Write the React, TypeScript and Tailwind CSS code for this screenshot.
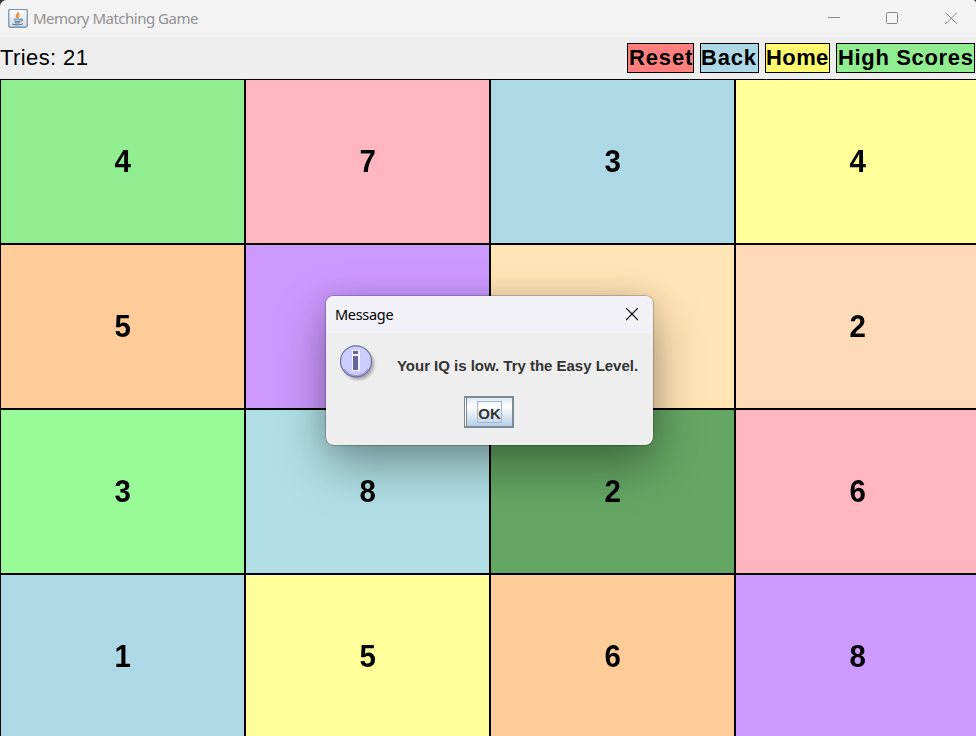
import React from "react";

const cards = [
  { n: "4", c: "bg-[#90ee90]" },
  { n: "7", c: "bg-[#ffb6c1]" },
  { n: "3", c: "bg-[#add8e6]" },
  { n: "4", c: "bg-[#ffff99]" },
  { n: "5", c: "bg-[#ffcc99]" },
  { n: "", c: "bg-[#cc99ff]" },
  { n: "", c: "bg-[#ffe4b5]" },
  { n: "2", c: "bg-[#ffdab9]" },
  { n: "3", c: "bg-[#98fb98]" },
  { n: "8", c: "bg-[#b0e0e6]" },
  { n: "2", c: "bg-[#64a664]" },
  { n: "6", c: "bg-[#ffb6c1]" },
  { n: "1", c: "bg-[#add8e6]" },
  { n: "5", c: "bg-[#ffff99]" },
  { n: "6", c: "bg-[#ffcc99]" },
  { n: "8", c: "bg-[#cc99ff]" },
];

const actions = [
  { label: "Reset", c: "w-[67px] pl-px tracking-[0.85px] bg-[#ff7f7f]" },
  { label: "Back", c: "w-[59px] tracking-[0.8px] bg-[#add8e6]" },
  { label: "Home", c: "w-[65px] tracking-[0.4px] bg-[#fffa6e]" },
  { label: "High Scores", c: "w-[139px] pl-px tracking-[0.65px] bg-[#90ee90]" },
];

function JavaIcon() {
  return (
    <svg width="20" height="20" viewBox="0 0 20 20" fill="none">
      <defs>
        <linearGradient id="java-bg" x1="0" y1="0" x2="0" y2="1">
          <stop offset="0" stopColor="#fff" />
          <stop offset="1" stopColor="#d5dde4" />
        </linearGradient>
      </defs>
      <rect x="0.75" y="0.25" width="18.5" height="18" rx="1.8" fill="url(#java-bg)" stroke="#7896b0" strokeWidth="1.3" />
      <path d="M10.200 3.200c.8 1.500-2.400 2.400-2 4.100.2.900.9 1.100 1.100 1.800M11.500 5.200c-1.800.8-2.300 1.400-1.600 2.300.5.700.3 1-.1 1.500" stroke="#ee8d3c" strokeWidth="1.500" />
      <path d="M5.500 10.200h7.500M6.300 12c1.800.6 4.200.6 6 0M6.800 13.500c1.500.6 3.500.6 5 0M12.800 10.200c2.200-.3 2 1.600-.1 2.300M4.300 15c2.600 1.200 8 1.100 10.700-.2" stroke="#5380a5" strokeWidth="1.100" />
    </svg>
  );
}

function InfoIcon() {
  return (
    <svg width="40" height="40" viewBox="0 0 40 40">
      <defs>
        <filter id="soft" x="-20%" y="-20%" width="140%" height="140%">
          <feGaussianBlur stdDeviation="1.700" />
        </filter>
      </defs>
      <circle cx="18.500" cy="19" r="15.500" fill="#000" opacity="0.3" filter="url(#soft)" />
      <circle cx="16" cy="16.300" r="15.500" fill="#ccccff" stroke="#7171a3" strokeWidth="1.200" />
      <path d="M4 24a14.300 14.300 0 0 0 24 0" fill="none" stroke="#9999cc" strokeWidth="1.200" />
      <path d="M12 5h8v21h-8z" fill="#f0f0ff" />
      <path d="M13 6h5v3h-5zM13 11h5v14h-5z" fill="#666699" />
    </svg>
  );
}

function Dialog() {
  return (
    <div className="absolute left-[326px] top-[296px] flex h-[149px] w-[327px] flex-col overflow-hidden rounded-[8px] bg-[#eeeeee] shadow-[0_0_0_1px_rgba(0,0,0,0.2),0_20px_50px_rgba(0,0,0,0.36),0_0_22px_rgba(0,0,0,0.1)]">
      <div className="flex h-[37px] shrink-0 items-center justify-between bg-[#f2f1f8] pl-[9px] pr-[15px]">
        <span className="font-['Noto_Sans','Open_Sans',sans-serif] text-[14.500px] tracking-[-0.3px] text-black">Message</span>
        <svg width="12" height="13" viewBox="0 0 12 13" className="stroke-black">
          <path d="M0 0l12 12M12 0l-12 12" strokeWidth="1.200" />
        </svg>
      </div>
      <div className="flex h-[63px] pl-[14px] pt-[12px]">
        <InfoIcon />
        <span className="ml-[17px] mt-[10px] whitespace-nowrap text-[15px] font-bold leading-[22px] tracking-[-0.02px] text-[#333333]">
          Your IQ is low. Try the Easy Level.
        </span>
      </div>
      <button className="ml-[138px] flex h-[32px] w-[50px] shrink-0 border-2 border-l border-[#7a8a99] bg-white pl-px">
        <span className="flex h-full w-full items-center border-l border-[#7a8a99] bg-linear-to-b from-[#dde8f3] via-white via-30% to-[#b8cfe5] pl-[10px]">
          <span className="flex h-[22px] w-[25px] items-center justify-center border border-[#a3b8cc] pt-[3px] text-[15px] font-bold leading-none text-[#333333]">
            OK
          </span>
        </span>
      </button>
    </div>
  );
}

export default function App() {
  return (
    <div className="relative h-[736px] w-[976px] overflow-hidden bg-[#333] font-['Liberation_Sans',Arial,sans-serif]">
      <div className="flex h-full flex-col overflow-hidden rounded-tl-[7px] rounded-tr-[4px] bg-[#eeeeee]">
        <header className="flex h-[37px] shrink-0 items-center justify-between bg-[#f3f3f3] pl-[8px] pr-[18px]">
          <div className="flex items-center gap-[5px]">
            <JavaIcon />
            <span className="font-['Noto_Sans','Open_Sans',sans-serif] text-[15px] tracking-[-0.5px] text-[#919191]">Memory Matching Game</span>
          </div>
          <svg width="130" height="14" viewBox="0 0 130 14" fill="none" stroke="#888">
            <path d="M0 5.500h12" />
            <rect x="58.500" y="0.500" width="11" height="11" rx="1" />
            <path d="M117.500 0.500l11.500 11.500M129 0.500l-11.500 11.500" />
          </svg>
        </header>
        <div className="flex h-[42px] shrink-0 items-start justify-between pr-px pt-[6px]">
          <span className="text-[22px] leading-[30px] tracking-[0.400px] text-black">Tries: 21</span>
          <div className="flex gap-[6px]">
            {actions.map((a) => (
              <button
                key={a.label}
                className={`flex h-[30px] items-center whitespace-nowrap border border-black text-[22px] font-bold leading-[28px] text-black ${a.c}`}
              >
                {a.label}
              </button>
            ))}
          </div>
        </div>
        <main className="grid w-[980px] shrink-0 grid-cols-4 auto-rows-[165px]">
          {cards.map((card, i) => (
            <div key={i} className={`flex items-center justify-center border border-black pt-px text-[31px] font-bold text-black ${card.c}`}>
              <span className="scale-x-95">{card.n}</span>
            </div>
          ))}
        </main>
      </div>
      <Dialog />
    </div>
  );
}
